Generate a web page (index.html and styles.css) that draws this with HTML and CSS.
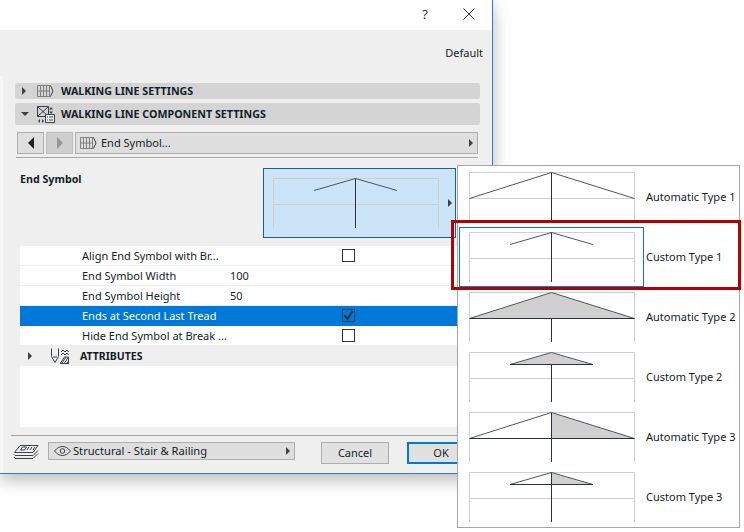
FILE: index.html
```html
<!DOCTYPE html>
<html lang="en">
<head>
<meta charset="utf-8">
<title>End Symbol</title>
<link rel="stylesheet" href="styles.css">
</head>
<body>
<svg class="defs" width="0" height="0" aria-hidden="true">
  <defs>
    <symbol id="frame" viewBox="0 0 166 50">
      <path class="guide" d="M.5 50V.5h165V50M.5 26.5h165"/>
    </symbol>
    <symbol id="grid" viewBox="0 0 17 12">
      <path class="ico-grey" d="M.5.5h13M.5 11.5h13M.5.5v11M3.5.5v11M6.5.5v11M9.5.5v11M12.5.5v11M.5 6h12"/>
      <path class="ico-dark" d="M13.5.5l2.5 5.5-2.5 5.5"/>
    </symbol>
  </defs>
</svg>

<div class="dialog">
  <header class="titlebar">
    <span class="help">?</span>
    <svg class="close" width="12" height="12" viewBox="0 0 12 12"><path d="M.5.5l11 11M11.5.5l-11 11"/></svg>
  </header>
  <div class="default-row">Default</div>
  <main class="main">
    <div class="bar bar-short">
      <span class="tri-right"></span>
      <svg class="bar-icon" width="17" height="12"><use href="#grid"/></svg>
      <span class="bar-title">WALKING LINE SETTINGS</span>
    </div>
    <div class="bar bar-tall">
      <span class="tri-down"></span>
      <svg class="bar-icon-lg" width="18" height="17" viewBox="0 0 18 17">
        <path class="ico-dark" d="M.5.5h11v10H.5zM.5.5l11 10M11.5.5l-11 10"/>
        <path class="ico-fill" d="M14 1l2 2.500h-4zM14 8l-2-2.500h4zM1 15l2-2v4zM7 15l-2-2v4z"/>
        <path class="ico-box" d="M8.500 8.500h9v8h-9zM10 11h1M12 11h4M10 14h1M12 14h4"/>
      </svg>
      <span class="bar-title">WALKING LINE COMPONENT SETTINGS</span>
    </div>
    <nav class="nav-row">
      <button class="nav-btn" type="button"><span class="tri-left-lg"></span></button>
      <button class="nav-btn nav-off" type="button"><span class="tri-right-lg"></span></button>
      <div class="nav-select">
        <svg class="select-icon" width="17" height="12"><use href="#grid"/></svg>
        <span class="select-text">End Symbol...</span>
        <span class="tri-right"></span>
      </div>
    </nav>
    <div class="rule rule-top"></div>
    <section class="symbol-row">
      <div class="symbol-label">End Symbol</div>
      <div class="preview">
        <svg class="sketch" width="166" height="50" viewBox="0 0 166 50">
          <use href="#frame" width="166" height="50"/>
          <path class="roof" d="M41 12.500L82.500.5 124 12.500"/>
          <path class="stem" d="M82.500.5V50"/>
        </svg>
        <span class="tri-right preview-arrow"></span>
      </div>
    </section>
    <section class="table">
      <div class="row"><span class="cell-name">Align End Symbol with Br...</span><span class="cell-value"></span><span class="check"></span></div>
      <div class="row"><span class="cell-name">End Symbol Width</span><span class="cell-value">100</span></div>
      <div class="row"><span class="cell-name">End Symbol Height</span><span class="cell-value">50</span></div>
      <div class="row row-selected"><span class="cell-name">Ends at Second Last Tread</span><span class="cell-value"></span>
        <span class="check check-on"><svg width="11" height="11" viewBox="0 0 11 11"><path d="M1.500 5.500l3 3.500 5-8"/></svg></span>
      </div>
      <div class="row row-last"><span class="cell-name">Hide End Symbol at Break ...</span><span class="cell-value"></span><span class="check"></span></div>
      <div class="group-row">
        <span class="tri-right"></span>
        <svg class="group-icon" width="18" height="16" viewBox="0 0 18 16">
          <path class="ico-dark" d="M.5.5v8l3.500 6 3.500-6v-8M2 9h4"/>
          <path class="ico-dark" d="M10 4l2-2 2 2 2-2 1.500 2M10 7l2-2 2 2 2-2 1.500 2"/>
          <path class="ico-dark" d="M9 15.500h9M9.500 15l4-6h4v6M11 15l4-6M13.500 15l3.500-5.500M16 15l1.500-2"/>
        </svg>
        <span class="group-title">ATTRIBUTES</span>
      </div>
      <div class="table-fill"></div>
    </section>
    <div class="rule rule-bottom"></div>
    <footer class="footer">
      <svg class="layers" width="26" height="16" viewBox="0 0 26 16">
        <path class="ico-dark" d="M7 1.500h18l-5 7H1.500zM1 10.500l1 1h18l5-5M1 13l1 1.500h18l5-5M9.500 3h4l-2 3h-4zM16 3l-2 3M19 3l-2 3M22 3l-2 3"/>
      </svg>
      <div class="layer-select">
        <svg class="eye" width="17" height="10" viewBox="0 0 17 10"><path d="M.5 5C3 2 5.500.5 8.500.5S14 2 16.500 5C14 8 11.500 9.500 8.500 9.500S3 8 .5 5z"/><circle cx="8.500" cy="5" r="2.300"/></svg>
        <span class="select-text">Structural - Stair &amp; Railing</span>
        <span class="tri-right"></span>
      </div>
      <button class="btn btn-cancel" type="button">Cancel</button>
      <button class="btn btn-ok" type="button">OK</button>
    </footer>
  </main>
</div>

<aside class="popup">
  <div class="item">
    <svg class="sketch" width="166" height="50" viewBox="0 0 166 50">
      <use href="#frame" width="166" height="50"/>
      <path class="roof" d="M.5 26.500L82.500.5 165.500 26.500"/>
      <path class="stem" d="M82.500.5V50"/>
    </svg>
    <span class="item-label">Automatic Type 1</span>
  </div>
  <div class="item item-selected">
    <svg class="sketch" width="166" height="50" viewBox="0 0 166 50">
      <use href="#frame" width="166" height="50"/>
      <path class="roof" d="M41 12.500L82.500.5 124 12.500"/>
      <path class="stem" d="M82.500.5V50"/>
    </svg>
    <span class="item-label">Custom Type 1</span>
  </div>
  <div class="item">
    <svg class="sketch" width="166" height="50" viewBox="0 0 166 50">
      <use href="#frame" width="166" height="50"/>
      <path class="wedge" d="M.5 26.500L82.500.5 165.500 26.500z"/>
      <path class="roof" d="M.5 26.500L82.500.5 165.500 26.500"/>
      <path class="stem" d="M.5 26.500h165M82.500 26.500V50"/>
    </svg>
    <span class="item-label">Automatic Type 2</span>
  </div>
  <div class="item">
    <svg class="sketch" width="166" height="50" viewBox="0 0 166 50">
      <use href="#frame" width="166" height="50"/>
      <path class="wedge" d="M41 12.500L82.500.5 124 12.500z"/>
      <path class="roof" d="M41 12.500L82.500.5 124 12.500"/>
      <path class="stem" d="M41 12.500h83M82.500 12.500V50"/>
    </svg>
    <span class="item-label">Custom Type 2</span>
  </div>
  <div class="item">
    <svg class="sketch" width="166" height="50" viewBox="0 0 166 50">
      <use href="#frame" width="166" height="50"/>
      <path class="wedge" d="M82.500.5L165.500 26.500H82.500z"/>
      <path class="roof" d="M.5 26.500L82.500.5 165.500 26.500"/>
      <path class="stem" d="M.5 26.500h165M82.500.5V50"/>
    </svg>
    <span class="item-label">Automatic Type 3</span>
  </div>
  <div class="item">
    <svg class="sketch" width="166" height="50" viewBox="0 0 166 50">
      <use href="#frame" width="166" height="50"/>
      <path class="wedge" d="M82.500.5L124 12.500H82.500z"/>
      <path class="roof" d="M41 12.500L82.500.5 124 12.500"/>
      <path class="stem" d="M41 12.500h83M82.500.5V50"/>
    </svg>
    <span class="item-label">Custom Type 3</span>
  </div>
</aside>
<div class="callout"></div>
</body>
</html>
```
FILE: styles.css
```css
* { box-sizing: border-box; }
html, body { margin: 0; padding: 0; }
body {
  position: relative;
  width: 744px;
  height: 532px;
  overflow: hidden;
  background: #fff;
  color: #141c28;
  font-family: "Noto Sans", "Open Sans", sans-serif;
  font-size: 11px;
  line-height: 14px;
}
.defs { position: absolute; }

/* Dialog */
.dialog {
  display: flex;
  flex-direction: column;
  width: 493px;
  height: 474px;
  background: #efefef;
  border-right: 1px solid #2b7fd0;
  border-bottom: 1px solid #2b7fd0;
  box-shadow: 0 6px 16px rgba(0, 0, 0, .28);
}
.titlebar {
  display: flex;
  align-items: center;
  justify-content: flex-end;
  flex: none;
  height: 30px;
  padding-right: 17px;
  padding-bottom: 2px;
  background: #fff;
}
.help { margin-right: 35px; font-size: 13px; color: #333; }
.close { stroke: #333; stroke-width: 1; fill: none; }
.default-row {
  flex: none;
  height: 46px;
  padding: 16px 9px 0 0;
  text-align: right;
}
.main {
  display: flex;
  flex: 1;
  flex-direction: column;
  min-height: 0;
  padding: 7px 12px 0 12px;
  border-left: 3px solid #f6f6f6;
}

/* Section bars */
.bar {
  display: flex;
  flex: none;
  align-items: center;
  position: relative;
  border-radius: 3px;
  background: #d4d4d4;
  padding-left: 7px;
}
.bar-short { height: 16px; }
.bar-tall { height: 22px; margin-top: 4px; }
.bar-icon { margin-left: 11px; margin-right: 7px; }
.bar-icon-lg { margin-left: 8px; margin-right: 6px; }
.bar-title { font-weight: 700; font-size: 10.700px; }
.ico-grey { fill: none; stroke: #808080; stroke-width: 1; }
.ico-dark { fill: none; stroke: #3a4148; stroke-width: 1; }
.ico-fill { fill: #3a4148; }
.ico-box { fill: #efefef; stroke: #3a4148; stroke-width: 1; }

/* Triangles */
.tri-right, .tri-down, .tri-left-lg, .tri-right-lg { display: block; width: 0; height: 0; flex: none; }
.tri-right { border-left: 4px solid #404040; border-top: 4px solid transparent; border-bottom: 4px solid transparent; }
.tri-down { border-top: 4px solid #404040; border-left: 4px solid transparent; border-right: 4px solid transparent; margin-left: -1px; }
.tri-left-lg { border-right: 6px solid #222; border-top: 6px solid transparent; border-bottom: 6px solid transparent; }
.tri-right-lg { border-left: 6px solid #969696; border-top: 6px solid transparent; border-bottom: 6px solid transparent; }

/* Nav row */
.nav-row {
  display: flex;
  flex: none;
  gap: 2px;
  height: 22px;
  margin: 7px 2px 0 2px;
}
.nav-btn {
  display: flex;
  align-items: center;
  justify-content: center;
  width: 27px;
  height: 22px;
  padding: 0;
  border: 1px solid #adadad;
  background: #dedede;
}
.nav-off { background: #cfcfcf; border-color: #bcbcbc; }
.nav-select {
  display: flex;
  flex: 1;
  align-items: center;
  padding: 0 4px 0 4px;
  border: 1px solid #adadad;
  background: #dedede;
}
.select-icon { margin-right: 4px; }
.select-text { flex: 1; }
.rule { flex: none; height: 1px; background: #a6a6a6; }
.rule-top { margin: 3px 2px 0 1px; }
.rule-bottom { margin: 8px -12px 0 -4px; }

/* End symbol preview */
.symbol-row {
  display: flex;
  flex: none;
  height: 70px;
  margin-top: 10px;
  padding-left: 5px;
}
.symbol-label { width: 243px; padding-top: 4px; font-weight: 700; font-size: 10.700px; }
.preview {
  display: flex;
  align-items: center;
  width: 193px;
  height: 70px;
  padding: 9px 0 9px 9px;
  background: #cce4f7;
  border: 1px solid #1d5e98;
}
.preview .sketch { align-self: flex-start; }
.preview-arrow { margin-left: 9px; }
.sketch { display: block; flex: none; overflow: visible; }
.guide { fill: none; stroke: #cfcfcf; stroke-width: 1; }
.roof { fill: none; stroke: #4b5560; stroke-width: 1; }
.stem { fill: none; stroke: #28333e; stroke-width: 1; }
.wedge { fill: #d0d0d0; }

/* Table */
.table {
  display: flex;
  flex: 1;
  flex-direction: column;
  min-height: 0;
  margin: 8px 0 0 5px;
  background: #fff;
}
.row {
  display: flex;
  flex: none;
  align-items: center;
  height: 20px;
  padding-left: 62px;
  border-bottom: 1px solid #efefef;
}
.row-selected { background: #0078d7; color: #fff; border-bottom: 0; }
.row-last { height: 19px; border-bottom: 0; }
.cell-name { width: 148px; white-space: nowrap; overflow: hidden; }
.cell-value { width: 112px; }
.check {
  display: block;
  width: 13px;
  height: 13px;
  border: 1px solid #333;
  background: #fff;
}
.check-on { margin-bottom: 2px; background: #0078d7; border-color: #1c3f61; }
.check-on svg { display: block; fill: none; stroke: #1f3347; stroke-width: 2; }
.group-row {
  display: flex;
  flex: none;
  align-items: center;
  height: 21px;
  padding-left: 8px;
  background: #efefef;
}
.group-icon { margin-left: 19px; margin-right: 11px; }
.group-title { font-weight: 700; font-size: 10.500px; }
.table-fill { flex: 1; }

/* Footer */
.footer {
  display: flex;
  flex: none;
  align-items: flex-start;
  height: 31px;
  margin: 6px -12px 0 -2px;
}
.layers { margin-top: 2px; }
.layer-select {
  display: flex;
  align-items: center;
  width: 247px;
  height: 18px;
  margin-left: 9px;
  padding: 0 4px 0 5px;
  border: 1px solid #adadad;
  background: #dedede;
}
.layer-select .select-text { font-size: 11.150px; }
.eye { margin-right: 2px; flex: none; fill: none; stroke: #3a4148; stroke-width: 1; }
.btn {
  width: 68px;
  height: 22px;
  padding: 0;
  background: #e1e1e1;
  border: 1px solid #adadad;
  color: #141c28;
  font: inherit;
}
.btn-cancel { margin-left: 26px; }
.btn-ok { margin-left: 18px; border: 2px solid #0078d7; }

/* Popup menu overlay */
.popup {
  position: absolute;
  left: 457px;
  top: 165px;
  width: 283px;
  height: 363px;
  padding: 1px;
  background: #fff;
  border: 1px solid #a6a6a6;
}
.item {
  display: flex;
  align-items: flex-start;
  width: 185px;
  height: 60px;
  padding: 4px 0 0 9px;
  border: 1px solid transparent;
  white-space: nowrap;
}
.item-selected { border-color: #0078d7; }
.item-label { margin: 18px 0 0 11px; }

/* Red annotation */
.callout {
  position: absolute;
  left: 451px;
  top: 220px;
  width: 290px;
  height: 70px;
  border: 3px solid #b30000;
}
```
